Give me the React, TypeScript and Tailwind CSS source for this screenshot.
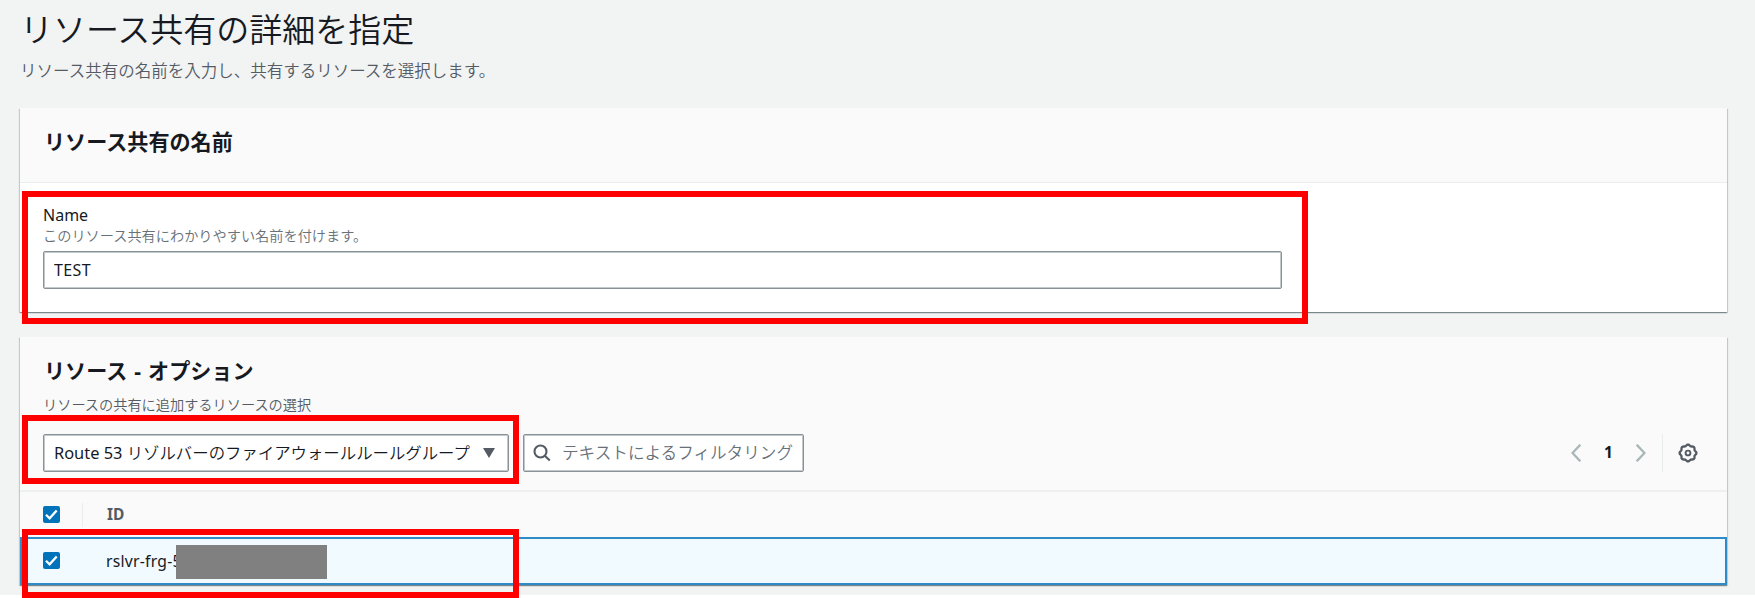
import { useState } from 'react';

interface CheckboxProps {
  checked: boolean;
  onToggle: () => void;
  label: string;
}

function Checkbox({ checked, onToggle, label }: CheckboxProps) {
  return (
    <button
      role="checkbox"
      aria-checked={checked}
      aria-label={label}
      onClick={onToggle}
      className="-mt-px block h-[17px] w-[17px] shrink-0 rounded-[2px] bg-[#0073bb]"
    >
      {checked && (
        <svg viewBox="0 0 17 17" className="h-[17px] w-[17px]" fill="none" stroke="#ffffff" strokeWidth="2.3">
          <path d="M3 8.8 L6.6 12.3 L13.7 4.4" />
        </svg>
      )}
    </button>
  );
}

function SearchIcon() {
  return (
    <svg viewBox="0 0 18 18" className="h-[18px] w-[18px] shrink-0" fill="none" stroke="#545b64" strokeWidth="2.1">
      <circle cx="7.5" cy="7.5" r="6" />
      <path d="M11.8 11.8 L16.8 16.6" />
    </svg>
  );
}

// wavy outline with eight teeth
const gearPoints = Array.from({ length: 96 }, (_, i) => {
  const angle = (i / 96) * Math.PI * 2;
  const radius = 7.8 + 0.6 * Math.cos(angle * 8);
  return `${(10 + radius * Math.cos(angle)).toFixed(2)},${(10 + radius * Math.sin(angle)).toFixed(2)}`;
}).join(' ');

function GearIcon() {
  return (
    <svg viewBox="0 0 20 20" className="block h-5 w-5" fill="none" stroke="#545b64" strokeWidth="2.3">
      <polygon points={gearPoints} />
      <circle cx="10" cy="10" r="2.4" strokeWidth="1.9" />
    </svg>
  );
}

function App() {
  const [name, setName] = useState('TEST');
  const [filter, setFilter] = useState('');
  const [selected, setSelected] = useState(true);

  const toggle = () => setSelected(!selected);

  return (
    <div className="relative h-[598px] w-[1755px] overflow-hidden bg-white font-['Noto_Sans','Noto_Sans_CJK_JP',sans-serif] text-[16.4px] text-[#16191f]">
      <div className="h-[595px] bg-[#f2f3f3] pl-5 pr-7">
        <header className="h-[108px]">
          <h1 className="h-[58px] font-['Noto_Sans_CJK_JP',sans-serif] text-[33px] font-[350] leading-[56px]">
            リソース共有の詳細を指定
          </h1>
          <p className="font-['Noto_Sans_CJK_JP',sans-serif] text-[16.5px] font-[350] leading-[24px] text-[#545b64]">
            リソース共有の名前を入力し、共有するリソースを選択します。
          </p>
        </header>

        <section className="flex h-[204px] flex-col bg-white shadow-[0_1px_1px_0_rgba(0,28,36,0.3),1px_1px_1px_0_rgba(0,28,36,0.15),-1px_1px_1px_0_rgba(0,28,36,0.15)]">
          <div className="h-[75px] border-b border-[#eaeded] bg-[#fafafa] px-6 pt-[19px]">
            <h2 className="font-['Noto_Sans_CJK_JP',sans-serif] text-[21.1px] font-bold leading-[28px]">
              リソース共有の名前
            </h2>
          </div>
          <div className="pl-[23px] pt-5">
            <label htmlFor="share-name" className="block text-[16px] leading-[24px]">
              Name
            </label>
            <p className="-mt-px mb-[5px] font-['Noto_Sans_CJK_JP',sans-serif] text-[14.2px] font-[350] leading-[18px] pb-0.5 text-[#687078]">
              このリソース共有にわかりやすい名前を付けます。
            </p>
            <input
              id="share-name"
              value={name}
              onChange={(e) => setName(e.target.value)}
              className="block h-[38px] w-[1239px] rounded-[2px] border border-[#879196] bg-white px-2.5 text-[16px] tracking-[0.4px] shadow-[inset_0_0_0_1px_#c3c8cb] outline-none"
            />
          </div>
        </section>

        <section className="mt-[25px] flex h-[248px] flex-col bg-[#fafafa] shadow-[0_1px_1px_0_rgba(0,28,36,0.3),1px_1px_1px_0_rgba(0,28,36,0.15),-1px_1px_1px_0_rgba(0,28,36,0.15)]">
          <div className="h-[155px] border-b-2 border-[#eeefef] pl-[23px] pt-5">
            <h2 className="pl-px font-['Noto_Sans','Noto_Sans_CJK_JP',sans-serif] text-[21.1px] font-bold leading-[28px] [word-spacing:1.5px]">
              リソース - オプション
            </h2>
            <p className="mt-[9px] font-['Noto_Sans_CJK_JP',sans-serif] text-[14.2px] font-[350] leading-[20px] text-[#545b64]">
              リソースの共有に追加するリソースの選択
            </p>
            <div className="mt-[20px] flex items-center">
              <button className="flex h-[38px] w-[466px] items-center justify-between rounded-[2px] border border-[#879196] bg-white pl-2.5 pr-[13px] shadow-[inset_0_0_0_1px_#c3c8cb]">
                <span className="whitespace-nowrap font-[350]">
                  <span className="font-normal">Route 53</span> リゾルバーのファイアウォールルールグループ
                </span>
                <svg viewBox="0 0 12 10" className="h-[10px] w-3 shrink-0">
                  <path d="M0 0 H12 L6 10 Z" fill="#545b64" />
                </svg>
              </button>
              <div className="ml-[14px] flex h-[38px] w-[281px] items-center rounded-[2px] border border-[#879196] bg-white pl-[9px] shadow-[inset_0_0_0_1px_#c3c8cb]">
                <SearchIcon />
                <input
                  value={filter}
                  onChange={(e) => setFilter(e.target.value)}
                  placeholder="テキストによるフィルタリング"
                  className="ml-[11px] w-[240px] bg-transparent pb-px font-['Noto_Sans_CJK_JP',sans-serif] text-[16.6px] font-[350] outline-none placeholder:text-[#687078]"
                />
              </div>
              <div className="ml-auto flex items-center pr-[29px]">
                <svg viewBox="0 0 10 18" className="h-[18px] w-[10px]" fill="none" stroke="#aab7b8" strokeWidth="2.3">
                  <path d="M9.3 0.7 L1.5 9 L9.3 17.3" />
                </svg>
                <span className="w-[55px] text-center text-[15.5px] font-bold">1</span>
                <svg viewBox="0 0 10 18" className="h-[18px] w-[10px]" fill="none" stroke="#aab7b8" strokeWidth="2.3">
                  <path d="M0.7 0.7 L8.5 9 L0.7 17.3" />
                </svg>
                <div className="ml-4 mr-[15px] h-[38px] w-px bg-[#eaeded]" />
                <button aria-label="設定">
                  <GearIcon />
                </button>
              </div>
            </div>
          </div>

          <div className="flex h-[45px] items-center pl-[23px]">
            <Checkbox checked={selected} onToggle={toggle} label="すべて選択" />
            <div className="ml-[22px] h-6 w-px bg-[#eaeded]" />
            <span className="ml-6 text-[15.5px] font-bold text-[#545b64]">ID</span>
          </div>
          <div className="flex h-[48px] items-center border-2 border-[#2e8bc8] bg-[#f1faff] pl-[21px]">
            <Checkbox checked={selected} onToggle={toggle} label="行を選択" />
            <div className="relative ml-[46px]">
              <span className="text-[15.7px] tracking-[0.25px]">rslvr-frg-5</span>
              {/* mask over the rest of the id */}
              <div className="absolute left-[70px] top-[-4px] h-[34px] w-[151px] bg-[#808080]" />
            </div>
          </div>
        </section>
      </div>

      {/* highlight frames */}
      <div className="pointer-events-none absolute left-[22px] top-[191px] h-[133px] w-[1286px] border-[6px] border-[#ff0000]" />
      <div className="pointer-events-none absolute left-[22px] top-[415px] h-[69px] w-[497px] border-[6px] border-[#ff0000]" />
      <div className="pointer-events-none absolute left-[22px] top-[529px] h-[69px] w-[497px] border-[6px] border-[#ff0000]" />
    </div>
  );
}

export default App;
